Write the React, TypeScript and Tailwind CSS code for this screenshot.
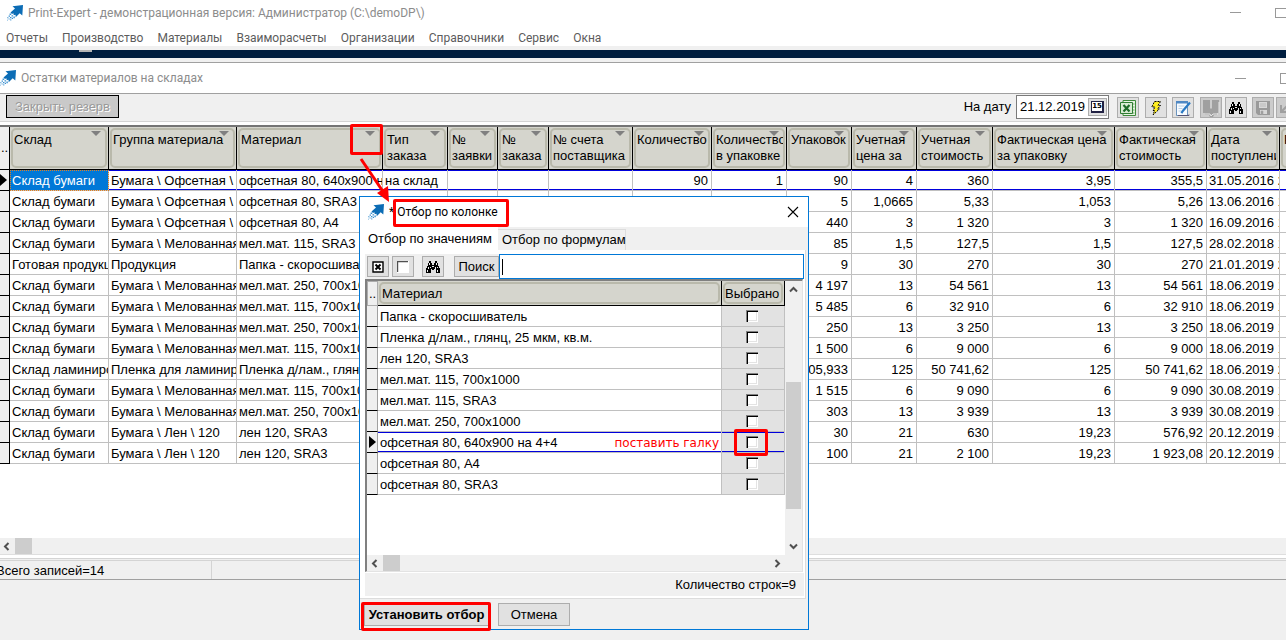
import React from 'react';
import { clsx } from 'clsx';

const menu = ['Отчеты', 'Производство', 'Материалы', 'Взаиморасчеты', 'Организации', 'Справочники', 'Сервис', 'Окна'];

const columns = [
  { title: ['Склад'], width: 'w-[99px]' },
  { title: ['Группа материала'], width: 'w-[128px]' },
  { title: ['Материал'], width: 'w-[146px]' },
  { title: ['Тип', 'заказа'], width: 'w-[65px]' },
  { title: ['№', 'заявки'], width: 'w-[50px]' },
  { title: ['№', 'заказа'], width: 'w-[51px]' },
  { title: ['№ счета', 'поставщика'], width: 'w-[84px]' },
  { title: ['Количество'], width: 'w-[79px]', numeric: true },
  { title: ['Количество', 'в упаковке'], width: 'w-[75px]', numeric: true },
  { title: ['Упаковок'], width: 'w-[65px]', numeric: true },
  { title: ['Учетная', 'цена за'], width: 'w-[65px]', numeric: true },
  { title: ['Учетная', 'стоимость'], width: 'w-[76px]', numeric: true },
  { title: ['Фактическая цена', 'за упаковку'], width: 'w-[122px]', numeric: true },
  { title: ['Фактическая', 'стоимость'], width: 'w-[92px]', numeric: true },
  { title: ['Дата', 'поступления'], width: 'w-[73px]' },
];

const offset = 'Бумага \\ Офсетная \\';
const coated = 'Бумага \\ Мелованная';
const linen = 'Бумага \\ Лен \\ 120';

const rows = [
  ['Склад бумаги', offset, 'офсетная 80, 640x900 на', 'на склад', '', '', '', '90', '1', '90', '4', '360', '3,95', '355,5', '31.05.2016 2'],
  ['Склад бумаги', offset, 'офсетная 80, SRA3', '', '', '', '', '', '', '5', '1,0665', '5,33', '1,053', '5,26', '13.06.2016 1'],
  ['Склад бумаги', offset, 'офсетная 80, A4', '', '', '', '', '', '', '440', '3', '1 320', '3', '1 320', '16.09.2016 1'],
  ['Склад бумаги', coated, 'мел.мат. 115, SRA3', '', '', '', '', '', '', '85', '1,5', '127,5', '1,5', '127,5', '28.02.2018 1'],
  ['Готовая продукция', 'Продукция', 'Папка - скоросшиватель', '', '', '', '', '', '', '9', '30', '270', '30', '270', '21.01.2019 2'],
  ['Склад бумаги', coated, 'мел.мат. 250, 700x1000', '', '', '', '', '', '', '4 197', '13', '54 561', '13', '54 561', '18.06.2019 1'],
  ['Склад бумаги', coated, 'мел.мат. 115, 700x1000', '', '', '', '', '', '', '5 485', '6', '32 910', '6', '32 910', '18.06.2019 1'],
  ['Склад бумаги', coated, 'мел.мат. 250, 700x1000', '', '', '', '', '', '', '250', '13', '3 250', '13', '3 250', '18.06.2019 1'],
  ['Склад бумаги', coated, 'мел.мат. 115, 700x1000', '', '', '', '', '', '', '1 500', '6', '9 000', '6', '9 000', '18.06.2019 1'],
  ['Склад ламинирования', 'Пленка для ламинирования', 'Пленка д/лам., глянц', '', '', '', '', '', '', '405,933', '125', '50 741,62', '125', '50 741,62', '18.06.2019 2'],
  ['Склад бумаги', coated, 'мел.мат. 115, 700x1000', '', '', '', '', '', '', '1 515', '6', '9 090', '6', '9 090', '30.08.2019 1'],
  ['Склад бумаги', coated, 'мел.мат. 250, 700x1000', '', '', '', '', '', '', '303', '13', '3 939', '13', '3 939', '30.08.2019 1'],
  ['Склад бумаги', linen, 'лен 120, SRA3', '', '', '', '', '', '', '30', '21', '630', '19,23', '576,92', '20.12.2019 1'],
  ['Склад бумаги', linen, 'лен 120, SRA3', '', '', '', '', '', '', '100', '21', '2 100', '19,23', '1 923,08', '20.12.2019 1'],
];

const materials = [
  'Папка - скоросшиватель',
  'Пленка д/лам., глянц, 25 мкм, кв.м.',
  'лен 120, SRA3',
  'мел.мат. 115, 700x1000',
  'мел.мат. 115, SRA3',
  'мел.мат. 250, 700x1000',
  'офсетная 80, 640x900 на 4+4',
  'офсетная 80, A4',
  'офсетная 80, SRA3',
];
const CURRENT_MATERIAL = 6;

const currentRow = 'shadow-[inset_0_1px_0_#0000dc,inset_0_-1px_0_#0000dc]';
const titleFont = 'font-[Roboto,sans-serif] text-xs';

const Logo: React.FC = () => (
  <svg aria-hidden="true" className="size-4 shrink-0" viewBox="0 0 16 16">
    <path d="M16 0 5.5 1.2 8 3.4 3.5 7.5 5 9l1.4-.7.3 2 1.8-.6.2 2.6 4-4.1 2.6 2.3z" fill="#0b6cb5" />
    <path d="M2.6 8.6h1.6v1.5H2.6zM4.5 10.2H6v1.4H4.5zM1.6 10.4H3v1.3H1.6zM6.4 11.4h1.4v1.8H6.4zM3 12h1.4v1.3H3zM.2 12.2h1.2v1H.2zM4.8 12.8H6V14H4.8zM1.6 13.6h1v1h-1zM3.3 14.3h1v1.2h-1zM0 14.8h.8v.8H0z" fill="#3a8fcf" />
  </svg>
);

const Binoculars: React.FC = () => (
  <svg aria-hidden="true" className="size-4" shapeRendering="crispEdges" viewBox="0 0 16 16">
    <path d="M4 2h2v2h1v2h2V4h1V2h2v2h1v3h1v2h1v5h-4v-4H9v1H7v-1H6v4H1V9h1V7h1V4h1z" fill="#000" />
    <path d="M4 4h1v2H4zM11 4h1v2h-1zM3 8h1v2H3zM5 8h1v1H5zM10 8h1v2h-1zM12 8h1v1h-1zM2 11h1v2H2zM12 11h1v2h-1zM7 7h2v1H7z" fill="#eee" />
  </svg>
);

const ExcelIcon = () => (
  <svg aria-hidden="true" className="size-4" viewBox="0 0 16 16">
    <path d="M3 .5h12.5v15H3z" fill="#e8f3e4" stroke="#3c8a3a" />
    <path d="M12 4h2.500M12 7h2.500M12 10h2.500M12 13h2.500" stroke="#69ad62" />
    <path d="M.5 2.5h12v11H.5z" fill="#d9ecd4" stroke="#2f7d32" />
    <path d="m3.500 5 6 6.500M9.500 5l-6 6.500" stroke="#1d6b27" strokeWidth="2.2" />
  </svg>
);

const BoltIcon = () => (
  <svg aria-hidden="true" className="size-4" viewBox="0 0 16 16">
    <path d="M6.5 1.5h6l-2.5 4h2.5L9.5 9h1.8L5 15l1.6-4.5H5L7 7H3.8z" fill="#ffee22" stroke="#000" strokeDasharray="2 1" />
  </svg>
);

const NoteIcon = () => (
  <svg aria-hidden="true" className="size-4" viewBox="0 0 16 16">
    <path d="M1.5 1.5h11v14h-11z" fill="#f7fbff" stroke="#6a93bd" />
    <path d="M1 1h12v2.5H1z" fill="#4f88c4" />
    <path d="M3.5 6h6M3.5 8.5h4M3.5 11h3" stroke="#b9cfe6" />
    <path d="m15 2.5-7 8.2-1.6 2.5" fill="none" stroke="#2a7ac4" strokeWidth="2.2" />
    <path d="M14 14.5v1H3" fill="none" stroke="#557" />
  </svg>
);

const BookIcon = () => (
  <svg aria-hidden="true" className="size-[18px]" viewBox="0 0 18 18">
    <path d="M1 1h7v8l1 1 1-1V1h7v13h-2v2h-3l-1 2H8l-1-2H3v-2H1z" fill="#a0a0a0" />
    <path d="M3 15h5l1 2 2-2h5M17 3v11" fill="none" stroke="#e8e8e8" />
  </svg>
);

const DiskIcon = () => (
  <svg aria-hidden="true" className="size-4" viewBox="0 0 16 16">
    <path d="M1 1h14v14H3l-2-2z" fill="#9a9a9a" />
    <path d="M4 2h8v6H4zM5 10h7v4H5z" fill="#d8d8d8" />
    <path d="M6 11h2v3H6zM5 4h6M5 6h6" fill="#9a9a9a" stroke="#aaa" strokeWidth=".6" />
  </svg>
);

const UndoIcon = () => (
  <svg aria-hidden="true" className="size-4 shrink-0" viewBox="0 0 16 16">
    <path d="M2 5v7h7M2 12l6-6h5" fill="none" stroke="#a0a0a0" strokeWidth="2" />
  </svg>
);

const ToolButton: React.FC<{ label: string; disabled?: boolean; className?: string; children: React.ReactNode }> = ({
  label,
  disabled,
  className,
  children,
}) => (
  <button
    aria-label={label}
    className={clsx(
      'flex h-[21px] w-[22px] shrink-0 items-center justify-center border border-[#adadad]',
      disabled ? 'bg-[#cccccc]' : 'bg-[#e1e1e1]',
      className,
    )}
    disabled={disabled}
    type="button"
  >
    {children}
  </button>
);

const Chevron: React.FC<{ className?: string }> = ({ className }) => (
  <svg aria-hidden="true" className={clsx('size-[9px] shrink-0', className)} viewBox="0 0 9 9">
    <path d="M6.5 1 3 4.5 6.5 8" fill="none" stroke="#505050" strokeWidth="2" />
  </svg>
);

const HeaderBox: React.FC<{ className?: string; children: React.ReactNode }> = ({ className, children }) => (
  <div
    className={clsx(
      'relative m-px overflow-hidden rounded-[5px] border-2 border-[#b9b9ab] text-left font-normal leading-4 whitespace-nowrap',
      className,
    )}
  >
    {children}
  </div>
);

const RowMarker = () => (
  <svg aria-hidden="true" className="h-3 w-[7px]" viewBox="0 0 7 12">
    <path d="M0 0v12l7-6z" />
  </svg>
);

const StockTable: React.FC = () => (
  <table className="w-full table-fixed border-separate border-spacing-0">
    <colgroup>
      <col className="w-[10px]" />
      {columns.map((c) => (
        <col className={c.width} key={c.title.join(' ')} />
      ))}
      <col />
    </colgroup>
    <thead>
      <tr className="h-[43px] bg-[#d5d5cd]">
        <th className="overflow-hidden border-r border-b border-black bg-[#efefef] p-0 align-middle font-normal">..</th>
        {columns.map((c) => (
          <th className="border-r border-b border-black p-0 align-top" key={c.title.join(' ')} scope="col">
            <HeaderBox className="h-10 pt-[2px] pl-px">
              {c.title.map((line) => (
                <div key={line}>{line}</div>
              ))}
              <svg aria-hidden="true" className="absolute top-px right-1 h-[5px] w-[10px]" viewBox="0 0 10 5">
                <path d="M0 0h10L5 5z" fill="#808080" />
              </svg>
            </HeaderBox>
          </th>
        ))}
        <th className="overflow-hidden border-b border-black p-0 align-top">
          <HeaderBox className="h-10 w-20 pt-[2px] pl-px">Р</HeaderBox>
        </th>
      </tr>
    </thead>
    <tbody>
      {rows.map((row, i) => (
        <tr className="h-[21px]" key={i}>
          <td className="border-r border-b border-black bg-[#efefef] p-0">{i === 0 && <RowMarker />}</td>
          {row.map((value, j) => (
            <td
              className={clsx(
                'overflow-hidden border-r border-b border-[#c0c0c0] pt-[2px] pr-[3px] pb-0 pl-[2px] leading-[18px] whitespace-nowrap',
                columns[j].numeric ? 'text-right' : 'text-clip',
                i === 0 && j > 0 && currentRow,
                i === 0 && j === 0 && 'bg-[#0078d7] text-white outline outline-offset-[-1px] outline-dotted outline-[#e08020]',
              )}
              key={j}
            >
              {value}
            </td>
          ))}
          <td className={clsx('border-b border-[#c0c0c0] p-0', i === 0 && currentRow)} />
        </tr>
      ))}
    </tbody>
  </table>
);

const MaterialTable: React.FC = () => (
  <table className="w-full table-fixed border-separate border-spacing-0">
    <colgroup>
      <col className="w-[11px]" />
      <col />
      <col className="w-[63px]" />
    </colgroup>
    <thead>
      <tr className="h-[25px] bg-[#d5d5cd]">
        <th className="overflow-hidden border border-[#adadad] bg-[#efefef] p-0 font-normal">..</th>
        <th className="border-r border-b border-black p-0" scope="col">
          <HeaderBox className="h-[22px] pt-[2px] pl-px">Материал</HeaderBox>
        </th>
        <th className="border-r border-b border-black p-0" scope="col">
          <HeaderBox className="h-[22px] pt-[2px]">Выбрано</HeaderBox>
        </th>
      </tr>
    </thead>
    <tbody>
      {materials.map((name, i) => (
        <tr className="h-[21px]" key={name}>
          <td className="border-r border-b border-r-[#a0a0a0] border-b-black bg-[#efefef] p-0 pl-[2px]">
            {i === CURRENT_MATERIAL && <RowMarker />}
          </td>
          <td
            className={clsx(
              'border-r border-b border-[#c0c0c0] px-[2px] pt-[2px] pb-0 leading-[18px] whitespace-nowrap',
              i === CURRENT_MATERIAL && currentRow,
            )}
          >
            <label className="flex justify-between" htmlFor={`material-${i}`}>
              {name}
              {i === CURRENT_MATERIAL && (
                <span className="font-['DejaVu_Sans',sans-serif] text-xs leading-[18px] text-[#ff0000]">поставить галку</span>
              )}
            </label>
          </td>
          <td
            className={clsx(
              'border-r border-b border-[#c0c0c0] bg-[#e2e2e2] p-0 pr-[2px]',
              i === CURRENT_MATERIAL && currentRow,
            )}
          >
            <input
              className="mx-auto block size-3 appearance-none bg-white shadow-[inset_1px_1px_0_#808080,inset_2px_2px_0_#000,inset_-1px_-1px_0_#fff,inset_-2px_-2px_0_#e3e3e3]"
              id={`material-${i}`}
              type="checkbox"
            />
          </td>
        </tr>
      ))}
    </tbody>
  </table>
);

const FilterDialog: React.FC = () => (
  <div
    aria-label="Отбор по колонке"
    className="absolute top-[196px] left-[359px] w-[450px] border border-[#0078d7] bg-[#f0f0f0]"
    role="dialog"
  >
    <div className="flex h-[30px] items-center bg-white pr-[9px] pl-2">
      <Logo />
      <h2 className={clsx(titleFont, 'ml-[5px] leading-4')}>
        *<span className="ml-[3px]">Отбор по колонке</span>
      </h2>
      <button aria-label="Закрыть" className="ml-auto" type="button">
        <svg aria-hidden="true" className="size-3" viewBox="0 0 12 12">
          <path d="m1 1 10 10M11 1 1 11" stroke="#000" strokeWidth="1.1" />
        </svg>
      </button>
    </div>

    <div className="flex h-[23px] items-end whitespace-nowrap" role="tablist">
      <button aria-selected="true" className="h-[23px] w-[138px] bg-white pl-2 text-left" role="tab" type="button">
        Отбор по значениям
      </button>
      <button
        aria-selected="false"
        className="h-[21px] w-32 border-t border-r border-[#dcdcdc] pl-1 text-left"
        role="tab"
        type="button"
      >
        Отбор по формулам
      </button>
    </div>

    <div className="mr-[2px] border-r border-b border-[#dcdcdc] bg-white pt-[4px] pb-[2px] pl-[5px]">
      <div className="mr-px flex h-[25px] items-center bg-[#f0f0f0] pl-[2px]">
        <ToolButton label="Выбрать все">
          <svg aria-hidden="true" className="size-3" viewBox="0 0 12 12">
            <path d="M1 1h10v10H1z" fill="#fff" stroke="#000" strokeWidth="1.4" />
            <path d="m3.5 3.5 5 5M8.5 3.5l-5 5" stroke="#000" strokeWidth="2" />
          </svg>
        </ToolButton>
        <ToolButton className="ml-[3px]" label="Снять выбор">
          <svg aria-hidden="true" className="size-3" viewBox="0 0 12 12">
            <path d="M0 0h12v12H0z" fill="#fff" />
            <path d="M.5 11V.5H11" fill="none" stroke="#505050" strokeWidth="1.4" />
          </svg>
        </ToolButton>
        <ToolButton className="ml-2" label="Найти">
          <Binoculars />
        </ToolButton>
        <button className="ml-[10px] h-[21px] w-[45px] border border-[#adadad] bg-[#e1e1e1]" type="button">
          Поиск
        </button>
        <div className="flex h-[25px] min-w-0 flex-1 items-center border border-[#0078d7] bg-white pl-[2px]">
          <span className="h-4 w-px bg-black" />
          <input aria-label="Поиск" className="min-w-0 flex-1 outline-none" type="text" />
        </div>
      </div>

      <div className="mr-[2px] border-t-2 border-r border-b border-l-2 border-t-[#808080] border-r-[#e3e3e3] border-b-[#e3e3e3] border-l-[#808080]">
        <div className="flex h-[274px]">
          <div className="min-w-0 flex-1">
            <MaterialTable />
          </div>
          <div className="flex w-[17px] flex-col items-center bg-[#f0f0f0] py-1">
            <Chevron className="rotate-90" />
            <div className="mt-[88px] h-[127px] w-[15px] bg-[#cdcdcd]" />
            <Chevron className="mt-auto -rotate-90" />
          </div>
        </div>
        <div className="flex h-4 items-center bg-[#f0f0f0] pr-5 pl-[3px]">
          <Chevron />
          <div className="ml-1 h-full w-[17px] bg-[#cdcdcd]" />
          <Chevron className="ml-auto rotate-180" />
        </div>
      </div>
      <div className="mt-px mr-px bg-[#f0f0f0] pr-2 text-right leading-[23px]">Количество строк=9</div>
    </div>

    <div className="flex items-start px-1 pt-1 pb-[3px]">
      <button className="h-[23px] w-[125px] border border-[#adadad] bg-[#e1e1e1] font-bold whitespace-nowrap" type="button">
        Установить отбор
      </button>
      <button className="ml-[9px] h-[23px] w-[72px] border border-[#adadad] bg-[#e1e1e1]" type="button">
        Отмена
      </button>
    </div>

    {/* callouts over the dialog */}
    <div className="absolute top-[2px] left-[33px] h-[28px] w-[116px] rounded-[2px] border-3 border-[#ff0000]" />
    <div className="absolute top-[232px] left-[374px] h-[27px] w-[34px] rounded-[2px] border-3 border-[#ff0000]" />
    <div className="absolute top-[405px] left-px h-[29px] w-[130px] rounded-[2px] border-3 border-[#ff0000]" />
  </div>
);

const App: React.FC = () => (
  <div className="relative flex min-h-screen flex-col overflow-hidden bg-[#f0f0f0] font-['Liberation_Sans',Arial,sans-serif] text-[13px] leading-4 text-black">
    <header className={clsx(titleFont, 'bg-white')}>
      <div className="flex h-[25px] items-center pl-[7px] text-[#8c8c8c]">
        <Logo />
        <h1 className="ml-[5px]">Print-Expert - демонстрационная версия: Администратор (C:\demoDP\)</h1>
        <div className="ml-auto h-px w-[11px] bg-[#999]" />
        <div className="ml-[34px] h-[10px] w-[11px] border border-r-0 border-[#999]" />
      </div>
      <nav className="flex h-[21px] items-center gap-[14px] pt-1 pl-[6px] text-[#5c5c5c]">
        {menu.map((item) => (
          <a className="leading-4" href="#" key={item}>
            {item}
          </a>
        ))}
      </nav>
    </header>

    <div className="mt-1 flex h-2 bg-[#001e3f] pl-[79px]">
      <div className="h-[2px] w-[13px] bg-[#b5b5b5]" />
    </div>

    <main className="mt-1 border-y border-[#a0a0a0]">
      <div className={clsx(titleFont, 'flex h-[30px] items-center bg-white text-[#8c8c8c]')}>
        <Logo />
        <h2 className="ml-[5px]">Остатки материалов на складах</h2>
        <div className="ml-auto h-px w-[11px] bg-[#999]" />
        <div className="ml-[34px] h-[11px] w-[6px] border border-r-0 border-[#999]" />
      </div>

      <div className="flex h-[29px] items-start border-t border-b border-t-[#a0a0a0] border-b-[#d4d4d4] pt-px pl-[6px]">
        <button
          className="h-[23px] w-[113px] border border-black bg-[#c9c9c9] pt-px text-[#9a9a9a] [text-shadow:1px_1px_0_#fff]"
          disabled
          type="button"
        >
          Закрыть резерв
        </button>
        <label className="ml-auto leading-6" htmlFor="date">
          На дату
        </label>
        <div className="ml-[5px] flex h-6 w-[93px] items-center border border-[#7a7a7a] bg-white pl-[3px]">
          <input className="w-[66px] outline-none" defaultValue="21.12.2019" id="date" type="text" />
          <button
            aria-label="Календарь"
            className="ml-[2px] flex h-[18px] w-[19px] items-center justify-center border border-[#adadad] bg-[#e1e1e1]"
            type="button"
          >
            <span className="border border-r-2 border-b-2 border-[#224] bg-white font-['DejaVu_Sans',sans-serif] text-[7px] leading-[9px] font-bold">
              15
            </span>
          </button>
        </div>
        <div className="ml-2 flex pt-[2px]">
          <ToolButton label="Экспорт в Excel">
            <ExcelIcon />
          </ToolButton>
          <ToolButton className="ml-[6px]" label="Выполнить">
            <BoltIcon />
          </ToolButton>
          <ToolButton className="ml-[5px]" label="Изменить">
            <NoteIcon />
          </ToolButton>
          <ToolButton className="ml-[6px]" disabled label="Справочник">
            <BookIcon />
          </ToolButton>
          <ToolButton className="ml-[3px]" label="Найти">
            <Binoculars />
          </ToolButton>
          <ToolButton className="ml-[5px]" disabled label="Сохранить">
            <DiskIcon />
          </ToolButton>
          <div className="ml-[2px] w-[10px] overflow-hidden">
            <ToolButton disabled label="Отменить">
              <UndoIcon />
            </ToolButton>
          </div>
        </div>
      </div>

      <div className="border-t-3 border-white bg-white">
        <div className="h-[413px] border-t-2 border-[#757575]">
          <StockTable />
        </div>
        <div className="flex h-[17px] items-center border-b border-[#dedede] bg-[#f0f0f0] pl-[2px]">
          <Chevron />
          <div className="ml-1 h-full w-[17px] bg-[#cdcdcd]" />
        </div>
      </div>
      <div className="border-t-3 border-white">
        <div className="flex h-[21px] border-t-3 border-double border-[#d4d4d4]">
          <div className="-ml-1 w-[216px] border-r border-[#d4d4d4] leading-5">Всего записей=14</div>
        </div>
      </div>
    </main>

    <FilterDialog />

    {/* callout from the column filter button to the dialog title */}
    <div className="absolute top-[124px] left-[350px] h-[31px] w-[33px] rounded-[2px] border-3 border-[#ff0000]" />
    <svg aria-hidden="true" className="absolute top-[156px] left-[358px] h-[48px] w-[34px]" viewBox="0 0 34 48">
      <path d="m3 3 23 34" stroke="#ff0000" strokeWidth="3" />
      <path d="m31 46-12-9 11-7z" fill="#ff0000" />
    </svg>
  </div>
);

export default App;
